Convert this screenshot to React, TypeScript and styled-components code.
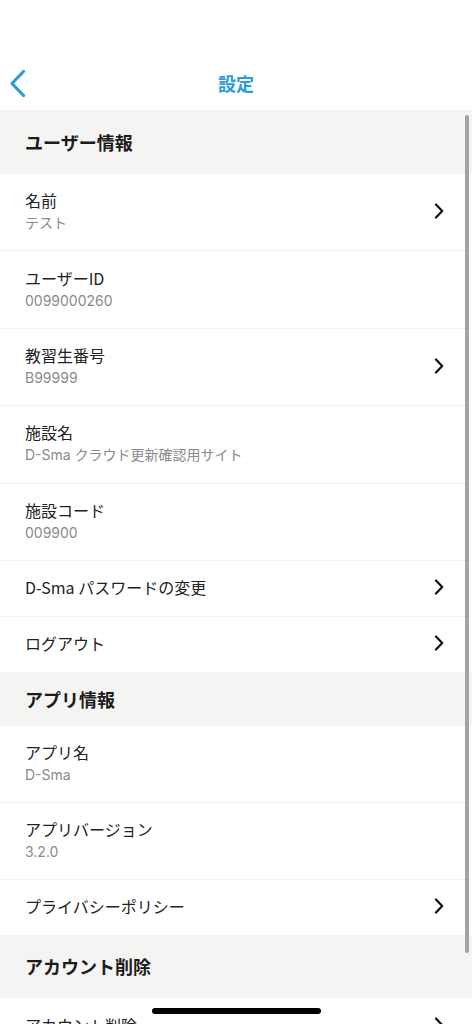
import React from "react";
import styled, { createGlobalStyle } from "styled-components";

const Global = createGlobalStyle`
  html, body { margin: 0; padding: 0; background: #fff; }
  body { font-family: "Noto Sans CJK JP", "Noto Sans", sans-serif; -webkit-font-smoothing: antialiased; }
  * { box-sizing: border-box; }
`;

const Screen = styled.div`
  position: relative;
  width: 472px;
  height: 1024px;
  overflow: hidden;
  background: #fff;
  display: flex;
  flex-direction: column;
`;

const NavBar = styled.header`
  margin-top: 58px;
  height: 52px;
  display: grid;
  grid-template-columns: 60px 1fr 60px;
  align-items: center;
  flex-shrink: 0;
`;

const BackButton = styled.button`
  border: 0;
  background: none;
  padding: 0 0 0 8px;
  display: flex;
  align-items: center;
  height: 100%;
  cursor: pointer;
`;

const NavTitle = styled.h1`
  margin: 0 0 2px;
  text-align: center;
  font-size: 18px;
  font-weight: 700;
  color: #2a9cdb;
  line-height: 1;
`;

const List = styled.main`
  display: flex;
  flex-direction: column;
`;

const SectionHeader = styled.div<{ $h: number }>`
  height: ${(p) => p.$h}px;
  background: #f4f4f3;
  display: flex;
  align-items: center;
  padding-left: 25px;
  font-size: 18px;
  font-weight: 700;
  color: #1c1c1c;
  flex-shrink: 0;
`;

const Row = styled.div<{ $h: number; $border?: boolean }>`
  height: ${(p) => p.$h}px;
  display: flex;
  align-items: center;
  justify-content: space-between;
  padding: 0 28px 2px 25px;
  border-bottom: ${(p) => (p.$border ? "1px solid #f1f1f1" : "0")};
  flex-shrink: 0;
`;

const RowText = styled.div`
  display: flex;
  flex-direction: column;
  gap: 4px;
`;

const RowTitle = styled.div`
  font-size: 16px;
  color: #222;
  line-height: 20px;
`;

const RowSub = styled.div`
  font-family: Inter, "Noto Sans CJK JP", sans-serif;
  font-size: 14px;
  color: #8a8a8a;
  line-height: 18px;
`;

const ScrollBar = styled.div`
  position: absolute;
  right: 3px;
  top: 115px;
  width: 4px;
  height: 838px;
  border-radius: 2px;
  background: #a3a3a3;
`;

const HomeIndicator = styled.div`
  position: absolute;
  left: 152px;
  top: 1008px;
  width: 169px;
  height: 6px;
  border-radius: 3px;
  background: #000;
`;

const Chevron = () => (
  <svg width="10" height="16" viewBox="0 0 10 16" fill="none">
    <path d="M2 1.5 L8.2 8 L2 14.5" stroke="#111" strokeWidth="2.2" strokeLinecap="round" strokeLinejoin="round" />
  </svg>
);

const BackIcon = () => (
  <svg width="20" height="30" viewBox="0 0 20 30" fill="none">
    <path d="M15.5 2.5 L4 14.5 L15.5 26.5" stroke="#2a9cdb" strokeWidth="3.2" strokeLinecap="round" strokeLinejoin="round" />
  </svg>
);

type ItemProps = { title: string; sub?: string; chevron?: boolean; h: number; border?: boolean };

const Item = ({ title, sub, chevron, h, border }: ItemProps) => (
  <Row $h={h} $border={border}>
    <RowText>
      <RowTitle>{title}</RowTitle>
      {sub && <RowSub>{sub}</RowSub>}
    </RowText>
    {chevron && <Chevron />}
  </Row>
);

export default function App() {
  return (
    <>
      <Global />
      <Screen>
        <NavBar>
          <BackButton aria-label="戻る">
            <BackIcon />
          </BackButton>
          <NavTitle>設定</NavTitle>
          <span />
        </NavBar>
        <List>
          <SectionHeader $h={64}>ユーザー情報</SectionHeader>
          <Item title="名前" sub="テスト" chevron h={77.4} border />
          <Item title="ユーザーID" sub="0099000260" h={77.4} border />
          <Item title="教習生番号" sub="B99999" chevron h={77.4} border />
          <Item title="施設名" sub="D-Sma クラウド更新確認用サイト" h={77.4} border />
          <Item title="施設コード" sub="009900" h={77.4} border />
          <Item title="D-Sma パスワードの変更" chevron h={56} border />
          <Item title="ログアウト" chevron h={55} />
          <SectionHeader $h={54}>アプリ情報</SectionHeader>
          <Item title="アプリ名" sub="D-Sma" h={77} border />
          <Item title="アプリバージョン" sub="3.2.0" h={77} border />
          <Item title="プライバシーポリシー" chevron h={55} />
          <SectionHeader $h={63}>アカウント削除</SectionHeader>
          <Item title="アカウント削除" chevron h={56} />
        </List>
        <ScrollBar />
        <HomeIndicator />
      </Screen>
    </>
  );
}
